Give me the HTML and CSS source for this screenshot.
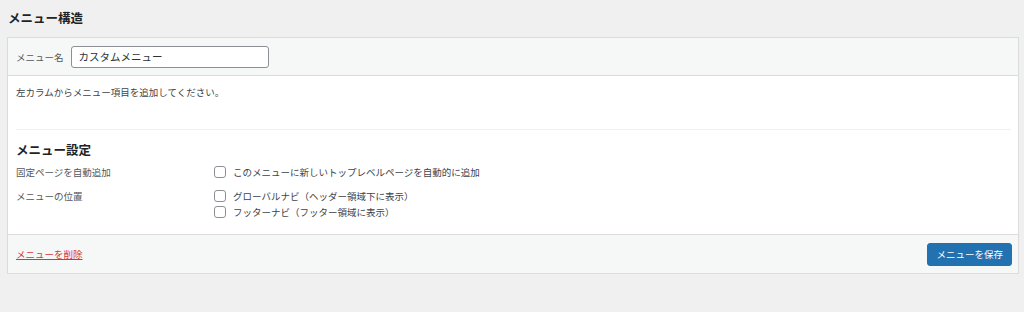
FILE: index.html
```html
<!DOCTYPE html>
<html lang="ja">
<head>
    <meta charset="UTF-8"/>
    <title>メニュー構造</title>
    <link rel="stylesheet" href="styles.css">
</head>
<body>
<main class="wrap">
    <h2 class="page-title">メニュー構造</h2>

    <div class="menu-box">
        <div class="menu-header">
            <label class="name-label" for="menu-name">メニュー名</label>
            <input class="name-input" id="menu-name" type="text" value="カスタムメニュー">
        </div>

        <div class="menu-body">
            <p class="hint">左カラムからメニュー項目を追加してください。</p>

            <div class="settings">
                <h3 class="settings-title">メニュー設定</h3>
                <div class="setting-row">
                    <div class="setting-label">固定ページを自動追加</div>
                    <div class="setting-options">
                        <label class="check"><span class="box"></span>このメニューに新しいトップレベルページを自動的に追加</label>
                    </div>
                </div>
                <div class="setting-row">
                    <div class="setting-label">メニューの位置</div>
                    <div class="setting-options">
                        <label class="check"><span class="box"></span>グローバルナビ（ヘッダー領域下に表示）</label>
                        <label class="check"><span class="box"></span>フッターナビ（フッター領域に表示）</label>
                    </div>
                </div>
            </div>
        </div>

        <div class="menu-footer">
            <a class="delete-link" href="#">メニューを削除</a>
            <button class="save-btn" type="button">メニューを保存</button>
        </div>
    </div>
</main>
</body>
</html>
```

FILE: styles.css
```css
* {
    box-sizing: border-box;
}

body {
    margin: 0;
    background: #f0f0f1;
    font-family: "Noto Sans CJK JP", "Noto Sans", sans-serif;
    font-size: 9.5px;
    color: #3c434a;
}

.wrap {
    padding: 8px 5px 0 7px;
}

.page-title {
    margin: 0 0 10px 1px;
    height: 19px;
    line-height: 19px;
    font-size: 12.5px;
    font-weight: 700;
    color: #1d2327;
}

.menu-box {
    background: #fff;
    border: 1px solid #dcdcde;
    box-shadow: 0 1px 1px rgba(0, 0, 0, 0.04);
}

.menu-header {
    display: flex;
    align-items: center;
    gap: 7px;
    height: 38px;
    padding: 0 8px;
    background: #f6f7f7;
    border-bottom: 1px solid #dcdcde;
}

.name-label {
    color: #50575e;
}

.name-input {
    width: 198px;
    height: 22px;
    padding: 0 7px;
    border: 1px solid #8c8f94;
    border-radius: 3px;
    font-family: inherit;
    font-size: 10.5px;
    color: #2c3338;
    background: #fff;
}

.menu-body {
    padding: 0 7px 0 8px;
}

.hint {
    margin: 0;
    padding: 8px 0 0;
    height: 54px;
    line-height: 16px;
    border-bottom: 1px solid #f0f0f1;
}

.settings {
    padding: 11px 0 14px;
}

.settings-title {
    margin: 0 0 5px;
    font-size: 12.5px;
    line-height: 18px;
    font-weight: 700;
    color: #1d2327;
}

.setting-row {
    display: flex;
    margin-bottom: 8px;
}

.setting-row:last-child {
    margin-bottom: 0;
}

.setting-label {
    width: 198px;
    line-height: 16px;
    color: #50575e;
}

.setting-options {
    display: flex;
    flex-direction: column;
}

.check {
    display: flex;
    align-items: center;
    gap: 7px;
    height: 16px;
}

.box {
    width: 12px;
    height: 12px;
    border: 1px solid #8c8f94;
    border-radius: 3px;
    background: #fff;
}

.menu-footer {
    display: flex;
    justify-content: space-between;
    align-items: center;
    height: 39px;
    padding: 0 6px 0 8px;
    background: #f6f7f7;
    border-top: 1px solid #dcdcde;
}

.delete-link {
    color: #d63638;
    text-decoration: underline;
}

.save-btn {
    height: 23px;
    padding: 0 8px;
    border: 1px solid #2271b1;
    border-radius: 3px;
    background: #2271b1;
    color: #fff;
    font-family: inherit;
    font-size: 9.5px;
}
```
